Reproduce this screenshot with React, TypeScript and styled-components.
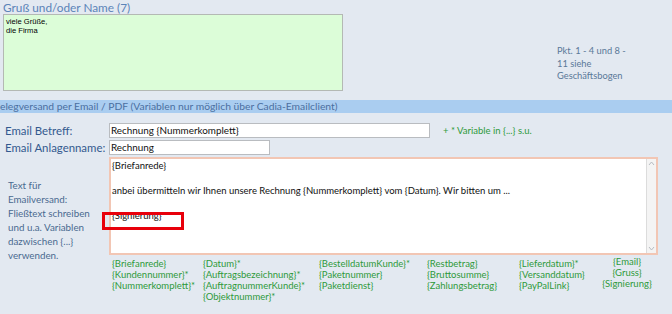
import React from 'react';
import styled, { createGlobalStyle } from 'styled-components';

const GlobalStyle = createGlobalStyle`
  html, body {
    margin: 0;
    padding: 0;
    background: #e3e9f1;
  }
  * {
    box-sizing: border-box;
  }
`;

const uiFont = `Lato, "Noto Sans", sans-serif`;

const Page = styled.div`
  width: 672px;
  height: 314px;
  overflow: hidden;
  background: #e3e9f1;
  font-family: ${uiFont};
  display: flex;
  flex-direction: column;
`;

const TopSection = styled.div`
  display: grid;
  grid-template-columns: 340px 1fr;
  padding: 1px 0 0 3px;
  height: 100px;
`;

const FieldTitle = styled.div`
  font-size: 11.8px;
  line-height: 13px;
  color: #5b84b8;
`;

const GreetingBox = styled.div`
  height: 77px;
  background: #dcfdd8;
  border: 1px solid #b4b9b4;
  padding: 2px 2px;
  font-family: "Liberation Sans", Arial, sans-serif;
  font-size: 7.6px;
  line-height: 9px;
  color: #000;
  white-space: pre-line;
`;

const Note = styled.div`
  margin: 44px 0 0 214px;
  width: 74px;
  font-size: 9.3px;
  line-height: 12.5px;
  color: #5a7898;
`;

const SectionBar = styled.div`
  height: 13px;
  background: #aacdf0;
  color: #4a6fa0;
  font-size: 10.3px;
  line-height: 13px;
  white-space: nowrap;
  overflow: hidden;
`;

const Form = styled.div`
  display: grid;
  grid-template-columns: 109px 549px;
  row-gap: 2px;
  padding-top: 10px;
`;

const Label = styled.div`
  padding-left: 5px;
  font-size: 11.4px;
  line-height: 15px;
  color: #33598f;
  white-space: nowrap;
`;

const Row = styled.div`
  display: flex;
  align-items: center;
  gap: 13px;
`;

const Input = styled.div<{ $width: number }>`
  width: ${(p) => p.$width}px;
  height: 15px;
  background: #fff;
  border: 1px solid #b9bcc0;
  padding: 0 1px;
  font-size: 9.9px;
  line-height: 13px;
  color: #111;
  white-space: nowrap;
`;

const Hint = styled.span`
  font-size: 9.5px;
  color: #2e9a3a;
`;

const SideLabel = styled.div`
  padding: 21px 0 0 8px;
  font-size: 9.8px;
  line-height: 14px;
  color: #4a6a90;
  white-space: pre-line;
`;

const TextArea = styled.div`
  position: relative;
  height: 98px;
  background: #fff;
  border: 2px solid #f2c6b4;
  display: flex;
`;

const TextBody = styled.div`
  flex: 1;
  padding: 1px 1px;
  font-size: 9.5px;
  line-height: 12.6px;
  color: #111;
  white-space: pre-line;
`;

const ScrollBar = styled.div`
  width: 10px;
  border-left: 1px solid #dcdcdc;
  background: #f4f4f4;
  display: flex;
  flex-direction: column;
  justify-content: space-between;
  align-items: center;
  padding: 2px 0;
`;

const Marker = styled.div`
  position: absolute;
  left: -9px;
  top: 53px;
  width: 82px;
  height: 18px;
  border: 3px solid #e8000b;
`;

const Variables = styled.div`
  display: grid;
  grid-template-columns: 91px 116px 108px 92px 77px auto;
  padding: 3px 0 0 3px;
  font-size: 9.5px;
  line-height: 11px;
  color: #2e9a3a;
`;

const VarColumn = styled.div<{ $centered?: boolean }>`
  display: flex;
  flex-direction: column;
  white-space: nowrap;
  ${(p) => (p.$centered ? 'align-items: center; margin-top: -2px;' : '')}
`;

const Arrow = ({ up }: { up?: boolean }) => (
  <svg width="7" height="5" viewBox="0 0 7 5">
    <path
      d={up ? 'M1 4 L3.5 1 L6 4' : 'M1 1 L3.5 4 L6 1'}
      fill="none"
      stroke="#b8bcc2"
      strokeWidth="1"
    />
  </svg>
);

const variableColumns = [
  ['{Briefanrede}', '{Kundennummer}*', '{Nummerkomplett}*'],
  ['{Datum}*', '{Auftragsbezeichnung}*', '{AuftragnummerKunde}*', '{Objektnummer}*'],
  ['{BestelldatumKunde}*', '{Paketnummer}', '{Paketdienst}'],
  ['{Restbetrag}', '{Bruttosumme}', '{Zahlungsbetrag}'],
  ['{Lieferdatum}*', '{Versanddatum}', '{PayPalLink}'],
  ['{Email}', '{Gruss}', '{Signierung}'],
];

export default function App() {
  return (
    <Page>
      <GlobalStyle />
      <TopSection>
        <div>
          <FieldTitle>Gruß und/oder Name (7)</FieldTitle>
          <GreetingBox>{'viele Grüße,\ndie Firma'}</GreetingBox>
        </div>
        <Note>Pkt. 1 - 4 und 8 - 11 siehe Geschäftsbogen</Note>
      </TopSection>

      <SectionBar>elegversand per Email / PDF (Variablen nur möglich über Cadia-Emailclient)</SectionBar>

      <Form>
        <Label>Email Betreff:</Label>
        <Row>
          <Input $width={321}>Rechnung {'{Nummerkomplett}'}</Input>
          <Hint>+ * Variable in {'{...}'} s.u.</Hint>
        </Row>

        <Label>Email Anlagenname:</Label>
        <Row>
          <Input $width={161}>Rechnung</Input>
        </Row>

        <SideLabel>
          {'Text für\nEmailversand:\nFließtext schreiben\nund u.a. Variablen\ndazwischen {...}\nverwenden.'}
        </SideLabel>
        <div>
          <TextArea>
            <TextBody>
              {'{Briefanrede}\n\nanbei übermitteln wir Ihnen unsere Rechnung {Nummerkomplett} vom {Datum}. Wir bitten um ...\n\n{Signierung}'}
            </TextBody>
            <ScrollBar>
              <Arrow up />
              <Arrow />
            </ScrollBar>
            <Marker />
          </TextArea>
          <Variables>
            {variableColumns.map((col, i) => (
              <VarColumn key={i} $centered={i === 5}>
                {col.map((v) => (
                  <span key={v}>{v}</span>
                ))}
              </VarColumn>
            ))}
          </Variables>
        </div>
      </Form>
    </Page>
  );
}
